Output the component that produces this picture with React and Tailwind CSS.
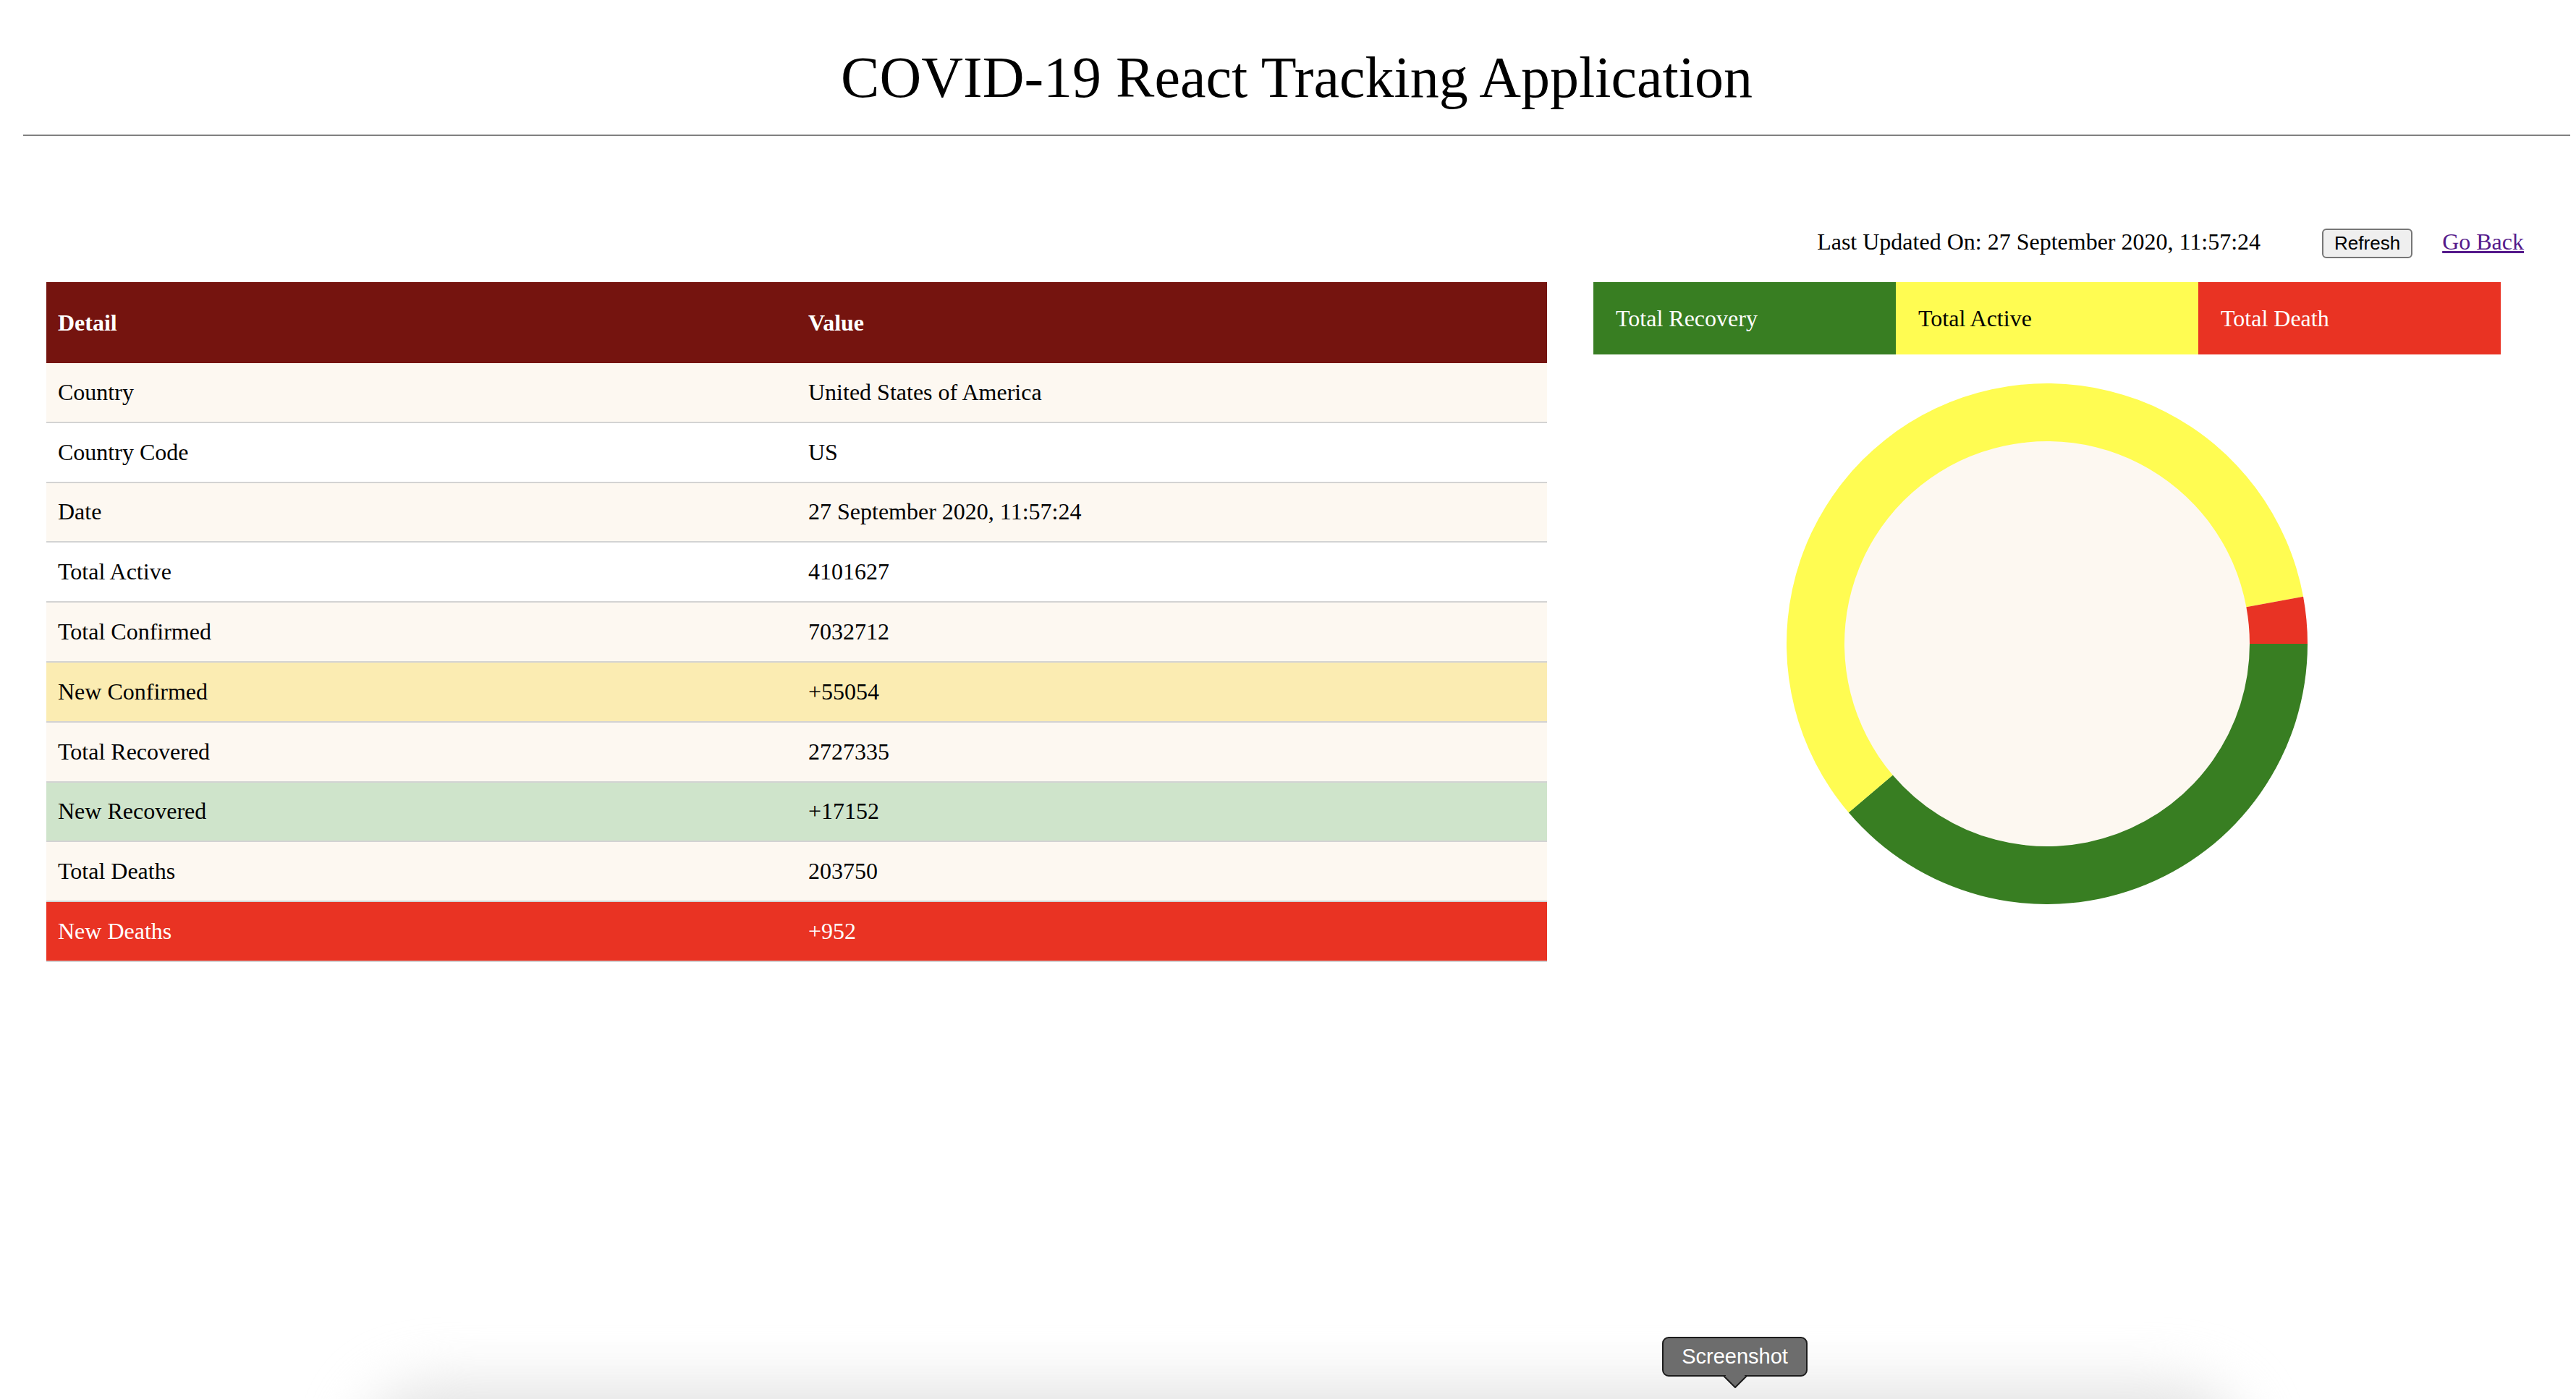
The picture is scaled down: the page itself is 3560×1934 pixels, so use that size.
import React from 'react';

const rows = [
  { label: 'Country', value: 'United States of America', bg: 'bg-[#fdf8f1]' },
  { label: 'Country Code', value: 'US', bg: 'bg-white' },
  { label: 'Date', value: '27 September 2020, 11:57:24', bg: 'bg-[#fdf8f1]' },
  { label: 'Total Active', value: '4101627', bg: 'bg-white' },
  { label: 'Total Confirmed', value: '7032712', bg: 'bg-[#fdf8f1]' },
  { label: 'New Confirmed', value: '+55054', bg: 'bg-[#fbecb2]' },
  { label: 'Total Recovered', value: '2727335', bg: 'bg-[#fdf8f1]' },
  { label: 'New Recovered', value: '+17152', bg: 'bg-[#cfe4cb]' },
  { label: 'Total Deaths', value: '203750', bg: 'bg-[#fdf8f1]' },
  { label: 'New Deaths', value: '+952', bg: 'bg-[#e93323] text-white' },
];

// slices go clockwise starting at 3 o'clock
const slices = [
  { name: 'recovered', value: 2727335, color: '#387e22' },
  { name: 'active', value: 4101627, color: '#fffc52' },
  { name: 'deaths', value: 203750, color: '#e83324' },
];

function arcPath(cx, cy, r0, r1, a0, a1) {
  const rad = (d) => (d * Math.PI) / 180;
  const large = a1 - a0 > 180 ? 1 : 0;
  const p = (r, a) => [cx + r * Math.cos(rad(a)), cy + r * Math.sin(rad(a))];
  const [x1, y1] = p(r1, a0);
  const [x2, y2] = p(r1, a1);
  const [x3, y3] = p(r0, a1);
  const [x4, y4] = p(r0, a0);
  return `M${x1} ${y1} A${r1} ${r1} 0 ${large} 1 ${x2} ${y2} L${x3} ${y3} A${r0} ${r0} 0 ${large} 0 ${x4} ${y4} Z`;
}

function Donut() {
  const total = slices.reduce((s, x) => s + x.value, 0);
  let start = 0;
  return (
    <svg width="720" height="720" viewBox="0 0 720 720" className="mx-auto mt-[40px] block">
      <circle cx="360" cy="360" r="281" fill="#fdf8f1" />
      {slices.map((s) => {
        const sweep = (s.value / total) * 360;
        const d = arcPath(360, 360, 280, 360, start, start + sweep);
        start += sweep;
        return <path key={s.name} d={d} fill={s.color} />;
      })}
    </svg>
  );
}

function App() {
  return (
    <div className="relative min-h-[1934px] overflow-hidden bg-white text-black font-['Liberation_Serif',serif]">
      <div className="ml-[32px] mr-[8px]">
        <h1 className="pt-[61px] text-center text-[80px] leading-[92px] font-normal">
          COVID-19 React Tracking Application
        </h1>
        <div className="mt-[33px] h-[2px] bg-[#808080]" />
      </div>

      <div className="mt-[128px] flex items-baseline justify-end pr-[72px] text-[32px] leading-[37px]">
        <span>Last Updated On: 27 September 2020, 11:57:24</span>
        <button className="ml-[85px] rounded-[6px] border-2 border-[#767676] bg-[#efefef] px-[15px] py-[3px] text-[26px] leading-[31px] font-['Liberation_Sans',sans-serif]">
          Refresh
        </button>
        <a href="#" className="ml-[41px] text-[#551a8b] underline">
          Go Back
        </a>
      </div>

      <div className="mt-[33px] flex items-start pl-[64px] pr-[104px]">
        <div className="w-[2074px] text-[32px] leading-[37px]">
          <div className="grid h-[112px] grid-cols-2 items-center bg-[#75140f] font-bold text-white">
            <div className="pl-[16px]">Detail</div>
            <div className="pl-[16px]">Value</div>
          </div>
          {rows.map((r) => (
            <div
              key={r.label}
              className={`grid h-[82.8px] grid-cols-2 items-center border-b-2 border-[#d3d3d3] ${r.bg}`}
            >
              <div className="pl-[16px]">{r.label}</div>
              <div className="pl-[16px]">{r.value}</div>
            </div>
          ))}
        </div>

        <div className="ml-[64px] flex-1">
          <div className="grid h-[100px] grid-cols-3 text-[32px] leading-[37px]">
            <div className="flex items-center bg-[#387e22] pl-[31px] text-white">Total Recovery</div>
            <div className="flex items-center bg-[#fffc52] pl-[31px] text-black">Total Active</div>
            <div className="flex items-center bg-[#e93323] pl-[31px] text-white">Total Death</div>
          </div>
          <Donut />
        </div>
      </div>

      <div className="absolute left-[500px] top-[1915px] h-[200px] w-[2600px] rounded-[120px] bg-[#e2e2e2] blur-[40px]" />

      <div className="absolute left-[2297px] top-[1848px]">
        <div className="flex h-[55px] w-[201px] items-center justify-center rounded-[9px] border-2 border-[#1c1c1c] bg-[#6d6d6d] text-[29px] text-white font-['Liberation_Sans',sans-serif]">
          Screenshot
        </div>
        <svg width="34" height="18" viewBox="0 0 34 18" className="absolute left-[84px] top-[53px]">
          <path d="M1 1 L17 17 L33 1" fill="#6d6d6d" stroke="#1c1c1c" strokeWidth="2" />
          <rect x="4" y="0" width="26" height="2" fill="#6d6d6d" />
        </svg>
      </div>
    </div>
  );
}

export default App;
